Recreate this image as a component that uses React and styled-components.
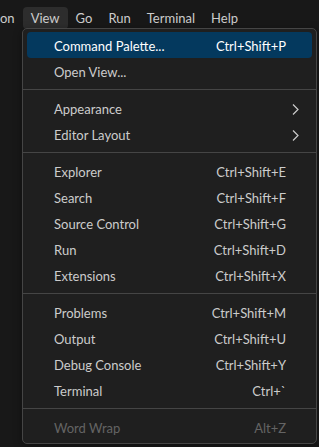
import React from "react";
import styled, { createGlobalStyle } from "styled-components";

const GlobalStyle = createGlobalStyle`
	body {
		margin: 0;
		background: #181818;
		font-family: "Segoe UI", Lato, "Liberation Sans", sans-serif;
		font-size: 13px;
		color: #cccccc;
	}
`;

const Page = styled.div`
	position: relative;
	height: 447px;
	overflow: hidden;
`;

const MenuBar = styled.div`
	display: flex;
	align-items: center;
	height: 35px;
`;

const BarItem = styled.div`
	height: 22px;
	line-height: 23px;
	padding: ${(props) => (props.$clipped ? "0 8px 0 0" : "0 8px")};
	border-radius: 4px;
	background: ${(props) => (props.$active ? "#2d2d2d" : "transparent")};
	color: #cccccc;
	white-space: nowrap;
`;

const Menu = styled.div`
	position: absolute;
	top: 28px;
	left: 22px;
	width: 293px;
	padding: 3px 0;
	background: #1f1f1f;
	border: 1px solid #454545;
	border-radius: 5px;
	box-shadow: 0 2px 8px rgba(0, 0, 0, 0.36);
`;

const Row = styled.div`
	display: flex;
	align-items: center;
	box-sizing: border-box;
	height: 26px;
	margin: 0 4px;
	padding: 2px 26px 0 27px;
	border-radius: 4px;
	background: ${(props) => (props.$selected ? "#04395e" : "transparent")};
	color: ${(props) => (props.$disabled ? "#646464" : props.$selected ? "#ffffff" : "#cccccc")};
`;

const Label = styled.span`
	flex: 1;
	white-space: nowrap;
`;

const Shortcut = styled.span`
	white-space: nowrap;
`;

const Chevron = styled.svg`
	width: 7px;
	height: 11px;
	margin-right: -13px;
`;

const Separator = styled.div`
	height: 1px;
	margin: 5px 0;
	background: #454545;
`;

const groups = [
	[
		{ label: "Command Palette...", keys: "Ctrl+Shift+P", selected: true },
		{ label: "Open View..." },
	],
	[
		{ label: "Appearance", submenu: true },
		{ label: "Editor Layout", submenu: true },
	],
	[
		{ label: "Explorer", keys: "Ctrl+Shift+E" },
		{ label: "Search", keys: "Ctrl+Shift+F" },
		{ label: "Source Control", keys: "Ctrl+Shift+G" },
		{ label: "Run", keys: "Ctrl+Shift+D" },
		{ label: "Extensions", keys: "Ctrl+Shift+X" },
	],
	[
		{ label: "Problems", keys: "Ctrl+Shift+M" },
		{ label: "Output", keys: "Ctrl+Shift+U" },
		{ label: "Debug Console", keys: "Ctrl+Shift+Y" },
		{ label: "Terminal", keys: "Ctrl+`" },
	],
	[{ label: "Word Wrap", keys: "Alt+Z", disabled: true }],
];

const MenuEntry = ({ item }) => (
	<Row $selected={item.selected} $disabled={item.disabled}>
		<Label>{item.label}</Label>
		{item.keys ? <Shortcut>{item.keys}</Shortcut> : null}
		{item.submenu ? (
			<Chevron viewBox="0 0 7 11">
				<path d="M1 0.5 L6 5.5 L1 10.5" fill="none" stroke="#cccccc" strokeWidth="1.2" />
			</Chevron>
		) : null}
	</Row>
);

export default function App() {
	return (
		<Page>
			<GlobalStyle />
			<MenuBar>
				<BarItem $clipped>on</BarItem>
				<BarItem $active>View</BarItem>
				<BarItem>Go</BarItem>
				<BarItem>Run</BarItem>
				<BarItem>Terminal</BarItem>
				<BarItem>Help</BarItem>
			</MenuBar>
			<Menu>
				{groups.map((group, i) => (
					<React.Fragment key={i}>
						{i > 0 ? <Separator /> : null}
						{group.map((item) => (
							<MenuEntry key={item.label} item={item} />
						))}
					</React.Fragment>
				))}
			</Menu>
		</Page>
	);
}
